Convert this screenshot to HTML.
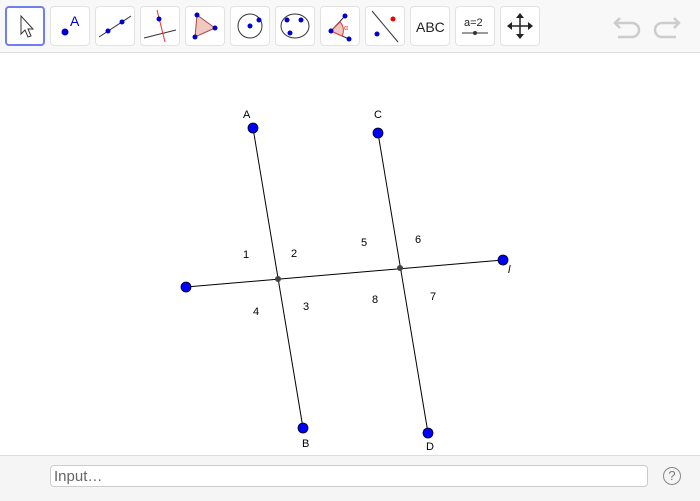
<!DOCTYPE html>
<html><head><style>
body{margin:0;width:700px;height:500px;overflow:hidden;background:#fff;font-family:"Liberation Sans",sans-serif;position:relative}
.tb{position:absolute;left:0;top:0;width:700px;height:52px;background:#f8f8f8;border-bottom:1px solid #ddd}
.bt{position:absolute;top:6px;width:38px;height:38px;border:1px solid #e2e2e2;border-radius:4px;background:#fff}
.bt svg{position:absolute;left:0;top:0}
.sel{border:2px solid #6f7ff0;width:36px;height:36px}
.bot{position:absolute;left:0;top:455px;width:700px;height:45px;background:#f5f5f5;border-top:1px solid #ddd}
.inp{position:absolute;left:50px;top:9px;width:596px;height:22px;border:1px solid #ccc;border-radius:4px;background:#fff;font-size:15px;color:#666;line-height:22px;padding-left:3px;box-sizing:border-box;width:598px}
.help{position:absolute;left:663px;top:11px;width:16px;height:16px;border:1.5px solid #888;border-radius:50%;text-align:center;font-size:13px;line-height:16px;color:#777}
</style></head><body>
<div class="tb">
<div class="bt sel" style="left:5px"><svg width="36" height="36"><path d="M14 8 L14 26 L18 22 L21 29 L24 28 L21 21 L26 21 Z" fill="#fff" stroke="#333" stroke-width="1"/></svg></div>
<div class="bt" style="left:50px"><svg width="38" height="38"><circle cx="14" cy="25" r="3.5" fill="#00c"/><text x="19" y="19" font-size="14" fill="#00c" font-family="Liberation Sans">A</text></svg></div>
<div class="bt" style="left:95px"><svg width="38" height="38"><line x1="3" y1="30" x2="35" y2="9" stroke="#333"/><circle cx="12" cy="24" r="2.5" fill="#00c"/><circle cx="26" cy="15" r="2.5" fill="#00c"/></svg></div>
<div class="bt" style="left:140px"><svg width="38" height="38"><line x1="3" y1="31" x2="35" y2="23" stroke="#333"/><line x1="16" y1="3" x2="24" y2="35" stroke="#e33"/><circle cx="18" cy="12" r="2.5" fill="#00c"/></svg></div>
<div class="bt" style="left:185px"><svg width="38" height="38"><polygon points="11,8 29,21 9,30" fill="#f0c8c0" stroke="#a44"/><circle cx="11" cy="8" r="2.5" fill="#00c"/><circle cx="29" cy="21" r="2.5" fill="#00c"/><circle cx="9" cy="30" r="2.5" fill="#00c"/></svg></div>
<div class="bt" style="left:230px"><svg width="38" height="38"><circle cx="19" cy="19" r="12" fill="none" stroke="#333"/><circle cx="19" cy="19" r="2.5" fill="#00c"/><circle cx="28" cy="13" r="2.5" fill="#00c"/></svg></div>
<div class="bt" style="left:275px"><svg width="38" height="38"><ellipse cx="19" cy="19" rx="14" ry="12" fill="none" stroke="#333"/><circle cx="11" cy="13" r="2.5" fill="#00c"/><circle cx="25" cy="13" r="2.5" fill="#00c"/><circle cx="14" cy="26" r="2.5" fill="#00c"/></svg></div>
<div class="bt" style="left:320px"><svg width="38" height="38"><path d="M10 24 L24 9 M10 24 L28 32" stroke="#333"/><path d="M10 24 L19 15 A12 12 0 0 1 21 29 Z" fill="#f0c8c0" stroke="#e33"/><circle cx="10" cy="24" r="2.5" fill="#00c"/><circle cx="24" cy="9" r="2.5" fill="#00c"/><circle cx="28" cy="32" r="2.5" fill="#00c"/><text x="23" y="23" font-size="7" fill="#e33">α</text></svg></div>
<div class="bt" style="left:365px"><svg width="38" height="38"><line x1="6" y1="4" x2="32" y2="35" stroke="#333"/><circle cx="27" cy="12" r="2.5" fill="#e00"/><circle cx="11" cy="27" r="2.5" fill="#00c"/></svg></div>
<div class="bt" style="left:410px"><svg width="38" height="38"><text x="5" y="25" font-size="14" fill="#222" font-family="Liberation Sans">ABC</text></svg></div>
<div class="bt" style="left:455px"><svg width="38" height="38"><text x="8" y="19" font-size="11" fill="#222" font-family="Liberation Sans">a=2</text><line x1="6" y1="26" x2="32" y2="26" stroke="#333"/><circle cx="19" cy="26" r="2" fill="#333"/></svg></div>
<div class="bt" style="left:500px"><svg width="38" height="38"><path d="M19 8 V30 M8 19 H30" stroke="#222" stroke-width="1.5"/><path d="M19 6 L15 11 H23Z M19 32 L15 27 H23Z M6 19 L11 15 V23Z M32 19 L27 15 V23Z" fill="#222"/></svg></div>
<svg style="position:absolute;left:610px;top:10px" width="75" height="32"><path d="M10 8 L5 13 L10 18 M5 13 H22 A7 7 0 0 1 22 27 H8" fill="none" stroke="#ccc" stroke-width="2.5"/><path d="M64 8 L69 13 L64 18 M69 13 H52 A7 7 0 0 0 52 27 H66" fill="none" stroke="#ccc" stroke-width="2.5"/></svg>
</div>
<svg style="position:absolute;left:0;top:0" width="700" height="455" font-family="Liberation Sans" font-size="11">
<line x1="253" y1="128" x2="303" y2="428" stroke="#000"/>
<line x1="378" y1="133" x2="428" y2="433" stroke="#000"/>
<line x1="186" y1="287" x2="503" y2="260" stroke="#000"/>
<g fill="#00f" stroke="#000" stroke-width="0.8">
<circle cx="253" cy="128" r="5"/><circle cx="303" cy="428" r="5"/><circle cx="378" cy="133" r="5"/><circle cx="428" cy="433" r="5"/><circle cx="186" cy="287" r="5"/><circle cx="503" cy="260" r="5"/></g>
<circle cx="278" cy="279" r="3" fill="#444"/><circle cx="400" cy="268" r="3" fill="#444"/>
<text x="243" y="118">A</text><text x="302" y="447">B</text><text x="374" y="118">C</text><text x="426" y="450">D</text><text x="508" y="273" font-style="italic">l</text>
<text x="243" y="258">1</text><text x="291" y="257">2</text><text x="303" y="310">3</text><text x="253" y="315">4</text>
<text x="361" y="246">5</text><text x="415" y="243">6</text><text x="430" y="300">7</text><text x="372" y="303">8</text>
</svg>
<div class="bot"><div class="inp">Input…</div><div class="help">?</div></div>
</body></html>
